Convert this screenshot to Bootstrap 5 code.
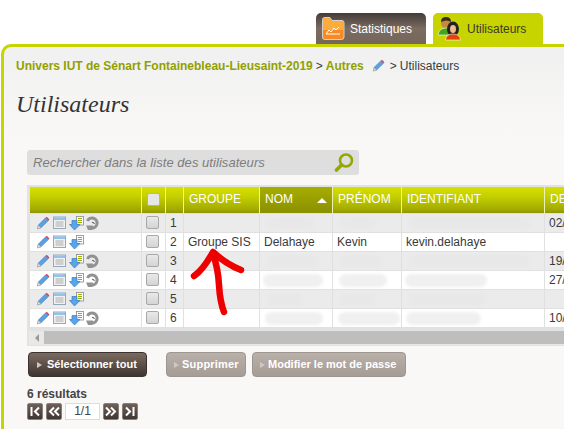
<!DOCTYPE html>
<html lang="fr"><head><meta charset="utf-8"><title>Utilisateurs</title>
<link href="https://cdn.jsdelivr.net/npm/bootstrap@5.3.0/dist/css/bootstrap.min.css" rel="stylesheet">
<style>
html,body{height:429px;overflow:hidden}
body{background:#fff;font-family:"Liberation Sans",Arial,sans-serif;font-size:12px;color:#3a3a3a;width:564px;position:relative}
.tabbar{height:44px;padding:13px 21px 0 0;gap:7px}
.tabitem{width:110px;height:31px;border-radius:5px 5px 0 0;font-size:12px;padding:0 0 0 5px;gap:5px}
.tabdark{background:linear-gradient(#443c39,#7b6b61 50%,#75665c);color:#fff}
.tabgreen{background:#c8d400;color:#3a3a28;padding-left:4px;gap:5px}
.panel{border:solid #c8d400;border-width:3px 0 0 3px;border-radius:10px 0 0 0;margin-left:1px;height:386px;background:linear-gradient(#f0f0f0,#f9f8f6 90px);padding:10px 0 0 12px}
.crumbs{height:17px;white-space:nowrap;gap:0}
.crumbs b{color:#91a000}
.crumbs .sep{margin:0 3px}
.pagetitle{font:italic 24px "Liberation Serif",serif;color:#333;margin:12px 0 0 0;height:61px;line-height:36px}
.searchbox{width:332px;height:25px;background:#dedede;border-radius:3px;padding:0 6px;margin-left:11px;margin-top:3px;font:italic 13px "Liberation Sans",sans-serif;color:#7d7d7d;letter-spacing:.05px}
.gridwrap{margin:10px 0 0 11px;width:537px;height:161px;background:#e2e2e2;padding:2px 0 0 2px;overflow:hidden}
.gridtable{table-layout:fixed;width:640px;border-collapse:collapse;margin:0;font-size:12px;color:#3a3a3a;--bs-table-bg:transparent;--bs-table-border-color:transparent}
.gridtable th{height:26px;padding:0 0 2px 5px;font-weight:400;font-size:12px;color:#fff;background:linear-gradient(#d6e000,#c5d000 35%,#a3ac00 85%,#8f9600);border-right:1px solid #eef2b0;border-bottom:0;vertical-align:middle;box-shadow:none}
.gridtable th.sorted{background:linear-gradient(#a6ad00,#8a9000);position:relative}
.sortup{position:absolute;right:5px;top:11px;width:0;height:0;border:5px solid transparent;border-bottom-color:#fff;border-top:0}
.gridtable td{height:19px;padding:0 0 0 4px;border:solid #e0e0e0;border-width:1px;vertical-align:middle;white-space:nowrap;line-height:1;box-shadow:none;position:relative}
.gridtable tr.alt td{background:#ebebeb}
.gridtable tr.plain td{background:#fff}
.gridtable td.acts{padding:0 0 0 6px;font-size:0}
.acts svg{margin-right:3px;vertical-align:middle}
.acts svg:nth-child(3){margin-right:1px}
.cellc{text-align:center}
.gridtable td.cellc{padding:0 2px 0 0}
.gridtable th.cellc{padding:0 0 2px 0}
.checkmock{display:inline-block;width:13px;height:13px;border:1px solid #a8a8a8;border-radius:2px;background:linear-gradient(#e9e9e9,#d4d4d4);vertical-align:middle}
.checkhead{background:#e6e6e6;border-color:#b5b5a0}
.smudge{position:absolute;top:3px;height:13px;border-radius:7px;background:#f0f0f0;filter:blur(1.5px)}
.smudgegrey{background:#e8e8e8;opacity:.7}
.scrollrail{height:14px;margin-top:3px;background:#e8e8e8;width:535px;gap:0;position:relative}
.scrollthumb{height:13px;background:#bebebe;margin-left:15px;flex:1}
.scrollarrow{position:absolute;left:6px;top:3px;width:0;height:0;border:4px solid transparent;border-right-color:#999;border-left:0}
.actions{margin:6px 0 0 12px;height:25px}
.btnmock{height:25px;padding:0 8px;font-size:11px;font-weight:700;line-height:23px;border-radius:4px;white-space:nowrap;color:#fff;text-align:left;--bs-btn-font-size:11px}
.btndark,.btndark:hover{background:linear-gradient(#7a6a60,#5b4d46 55%,#3e3531);border:1px solid #3a322e;color:#fff}
.btnoff,.btnoff:disabled{background:linear-gradient(#b9b0aa,#a69c96);border:1px solid #9d9590;color:#fff;opacity:1;padding:0 8px 0 5px}
.tri{display:inline-block;width:0;height:0;border:3.5px solid transparent;border-left:5px solid #cfc8c2;border-right:0;margin-right:5px}
.btnoff .tri{margin-right:3px;margin-left:2px}
.btn1{width:119px;margin-right:19px;padding-left:8px}
.btn2{width:80px;margin-right:6px;letter-spacing:.2px}.btn3{width:154px}
.counts{margin:10px 0 0 11px;font-weight:700;font-size:12px;height:15px;line-height:15px;color:#444}
.pager{margin:1px 0 0 11px;gap:3px;height:18px}
.pgbtn{width:16px;height:17px;border-radius:2px;background:linear-gradient(#6f6058,#3f3632);border:1px solid #8a807a;padding:0}
.pgbox{width:35px;height:17px;background:#fff;border:1px solid #ddd;font-size:12px;text-align:center;line-height:15px;color:#444}
.arrowover{position:absolute;left:185px;top:240px;width:70px;height:80px;pointer-events:none}
</style></head><body>
<svg width="0" height="0" class="position-absolute"><defs>
<symbol id="pen" viewBox="0 0 14 14"><path d="M1.500 12.800 2.400 9 9.600 1.800 12.400 4.600 5 11.800Z" fill="#5aa0e2" stroke="#4a80bd" stroke-width=".6"/><path d="M9.600 1.800 10.800.8 13.400 3.400 12.400 4.600Z" fill="#d8424f"/><path d="M1.300 13 2.200 9.400 5 12Z" fill="#e4ddd0" stroke="#999" stroke-width=".4"/></symbol>
<symbol id="win" viewBox="0 0 13 13"><rect x=".5" y="1" width="12" height="11.500" fill="#f1f1f1" stroke="#93a9bc"/><rect x="1" y="1.500" width="11" height="2.500" fill="#93c3ea"/><path d="M2.500 6h8M2.500 8h8M2.500 10h8" stroke="#c4c4c4" stroke-width="1.400"/></symbol>
<symbol id="dl" viewBox="0 0 15 14"><rect x="7.500" y=".5" width="7" height="8.500" fill="#fff" stroke="#888" stroke-width=".8"/><path d="M9 2.500h4M9 4.500h4M9 6.500h4" stroke="#98b000" stroke-width="1.200"/><path d="M3 4.500h5v4h3l-5.500 5.500L.5 8.500h2.500Z" fill="#5aa4ec" stroke="#3a7cc0" stroke-width=".7"/></symbol>
<symbol id="rf" viewBox="0 0 14 14"><path d="M2.500 5A5 5 0 1 1 7 12" fill="none" stroke="#929292" stroke-width="3"/><path d="M7 6.500A1.800 1.800 0 0 1 9.300 8" fill="none" stroke="#6f6f6f" stroke-width="1.200"/><path d="M1 9.500 8 9.500 7.500 14 3 14Z" fill="#929292"/></symbol>
</defs></svg>

<div class="tabbar d-flex justify-content-end">
  <div class="tabitem tabdark d-flex align-items-center">
    <svg width="24" height="25" viewBox="0 0 24 25"><path d="M1.500 3.500Q1.500 1.500 3.500 1.500H9L11 4.500H21Q23 4.500 23 6.500V21Q23 23.500 20.500 23.500H3.500Q1.500 23.500 1.500 21Z" fill="#f78a22" stroke="#d9cfc4"/><path d="M2 4Q2 2 4 2H9L11 5H21Q22 5 22.500 6V14H2Z" fill="#fbac3e"/><path d="M5 18h14M5 18l3-4 2 2 3-4 2 2 3-3" fill="none" stroke="#fff"/></svg>
    <span>Statistiques</span>
  </div>
  <div class="tabitem tabgreen d-flex align-items-center">
    <svg width="25" height="26" viewBox="0 0 25 26"><ellipse cx="9" cy="7" rx="5" ry="5.500" fill="#c68a3e"/><path d="M4 6Q4 1 9 1t5 5Q10 3 4 6Z" fill="#3a2a20"/><path d="M1 19Q2 12 9 12t8 7Z" fill="#47a318" stroke="#fff" stroke-width=".6"/><ellipse cx="16" cy="13" rx="6" ry="7.500" fill="#222"/><ellipse cx="16" cy="13" rx="3" ry="4" fill="#f2b98a"/><path d="M8.500 24Q9 18 16 18t7.500 6Z" fill="#e8420c" stroke="#ffe" stroke-width=".6"/></svg>
    <span>Utilisateurs</span>
  </div>
</div>

<div class="panel">
  <div class="crumbs d-flex align-items-center">
    <b>Univers IUT de Sénart Fontainebleau-Lieusaint-2019</b><span class="sep">&gt;</span><b>Autres</b>
    <svg style="margin:0 2px 0 8px" width="13" height="13"><use href="#pen"/></svg>
    <span class="sep">&gt;</span><span>Utilisateurs</span>
  </div>
  <h1 class="pagetitle">Utilisateurs</h1>
  <div class="searchbox d-flex align-items-center justify-content-between">
    <span>Rechercher dans la liste des utilisateurs</span>
    <svg width="20" height="21" viewBox="0 0 20 21" style="margin-right:-1px"><circle cx="12" cy="8.500" r="6" fill="none" stroke="#95a800" stroke-width="2.600"/><path d="M7.500 13 2.500 18" stroke="#95a800" stroke-width="3.600" stroke-linecap="round"/></svg>
  </div>
  <div class="gridwrap">
    <table class="table gridtable">
      <colgroup><col style="width:112px"><col style="width:24px"><col style="width:18px"><col style="width:76px"><col style="width:73px"><col style="width:69px"><col style="width:143px"><col style="width:125px"></colgroup>
      <thead><tr>
        <th></th><th class="cellc"><span class="checkmock checkhead"></span></th><th></th>
        <th>GROUPE</th><th class="sorted">NOM<span class="sortup"></span></th><th>PRÉNOM</th><th>IDENTIFIANT</th><th>DE</th>
      </tr></thead>
      <tbody>
        <tr class="alt"><td class="acts"><svg width="14" height="14"><use href="#pen"/></svg><svg width="13" height="13"><use href="#win"/></svg><svg width="15" height="14"><use href="#dl"/></svg><svg width="14" height="14"><use href="#rf"/></svg></td><td class="cellc"><span class="checkmock"></span></td><td>1</td><td></td><td><span class="smudge smudgegrey" style="left:5px;width:50px"></span></td><td><span class="smudge smudgegrey" style="left:5px;width:40px"></span></td><td><span class="smudge smudgegrey" style="left:5px;width:125px"></span></td><td>02/</td></tr>
        <tr class="plain"><td class="acts"><svg width="14" height="14"><use href="#pen"/></svg><svg width="13" height="13"><use href="#win"/></svg><svg width="15" height="14"><use href="#dl"/></svg></td><td class="cellc"><span class="checkmock"></span></td><td>2</td><td>Groupe SIS</td><td>Delahaye</td><td>Kevin</td><td>kevin.delahaye</td><td></td></tr>
        <tr class="alt"><td class="acts"><svg width="14" height="14"><use href="#pen"/></svg><svg width="13" height="13"><use href="#win"/></svg><svg width="15" height="14"><use href="#dl"/></svg><svg width="14" height="14"><use href="#rf"/></svg></td><td class="cellc"><span class="checkmock"></span></td><td>3</td><td></td><td><span class="smudge smudgegrey" style="left:5px;width:55px"></span></td><td><span class="smudge smudgegrey" style="left:5px;width:45px"></span></td><td><span class="smudge smudgegrey" style="left:5px;width:125px"></span></td><td>19/</td></tr>
        <tr class="plain"><td class="acts"><svg width="14" height="14"><use href="#pen"/></svg><svg width="13" height="13"><use href="#win"/></svg><svg width="15" height="14"><use href="#dl"/></svg><svg width="14" height="14"><use href="#rf"/></svg></td><td class="cellc"><span class="checkmock"></span></td><td>4</td><td></td><td><span class="smudge" style="left:3px;width:60px"></span></td><td><span class="smudge" style="left:6px;width:48px"></span></td><td><span class="smudge" style="left:3px;width:82px"></span></td><td>27/</td></tr>
        <tr class="alt"><td class="acts"><svg width="14" height="14"><use href="#pen"/></svg><svg width="13" height="13"><use href="#win"/></svg><svg width="15" height="14"><use href="#dl"/></svg></td><td class="cellc"><span class="checkmock"></span></td><td>5</td><td></td><td><span class="smudge smudgegrey" style="left:5px;width:38px"></span></td><td><span class="smudge smudgegrey" style="left:5px;width:38px"></span></td><td><span class="smudge smudgegrey" style="left:5px;width:80px"></span></td><td></td></tr>
        <tr class="plain"><td class="acts"><svg width="14" height="14"><use href="#pen"/></svg><svg width="13" height="13"><use href="#win"/></svg><svg width="15" height="14"><use href="#dl"/></svg><svg width="14" height="14"><use href="#rf"/></svg></td><td class="cellc"><span class="checkmock"></span></td><td>6</td><td></td><td><span class="smudge" style="left:5px;width:58px"></span></td><td><span class="smudge" style="left:5px;width:62px"></span></td><td><span class="smudge" style="left:4px;width:75px"></span></td><td>10/</td></tr>
      </tbody>
    </table>
    <div class="scrollrail d-flex"><span class="scrollarrow"></span><div class="scrollthumb"></div></div>
  </div>
  <div class="actions d-flex">
    <button class="btn btnmock btndark btn1"><span class="tri"></span>Sélectionner tout</button>
    <button class="btn btnmock btnoff btn2" disabled><span class="tri"></span>Supprimer</button>
    <button class="btn btnmock btnoff btn3" disabled><span class="tri"></span>Modifier le mot de passe</button>
  </div>
  <div class="counts">6 résultats</div>
  <div class="pager d-flex">
    <button class="btn pgbtn d-flex align-items-center justify-content-center"><svg width="12" height="11" viewBox="0 0 12 11"><path d="M2.500 1v9M10 1.500 6 5.500l4 4" fill="none" stroke="#fff" stroke-width="2"/></svg></button>
    <button class="btn pgbtn d-flex align-items-center justify-content-center"><svg width="12" height="11" viewBox="0 0 12 11"><path d="M6 1.500 2 5.500l4 4M11 1.500 7 5.500l4 4" fill="none" stroke="#fff" stroke-width="2"/></svg></button>
    <div class="pgbox">1/1</div>
    <button class="btn pgbtn d-flex align-items-center justify-content-center"><svg width="12" height="11" viewBox="0 0 12 11"><path d="M1 1.500l4 4-4 4M6 1.500l4 4-4 4" fill="none" stroke="#fff" stroke-width="2"/></svg></button>
    <button class="btn pgbtn d-flex align-items-center justify-content-center"><svg width="12" height="11" viewBox="0 0 12 11"><path d="M2 1.500l4 4-4 4M9.500 1v9" fill="none" stroke="#fff" stroke-width="2"/></svg></button>
  </div>
</div>

<svg class="arrowover" viewBox="185 240 70 80"><path d="M194 276Q203 270 213 252Q226 264 241 270M213 254Q218 268 219 285T224 312" fill="none" stroke="#ee0000" stroke-width="6.500" stroke-linecap="round" stroke-linejoin="round"/></svg>
</body></html>
